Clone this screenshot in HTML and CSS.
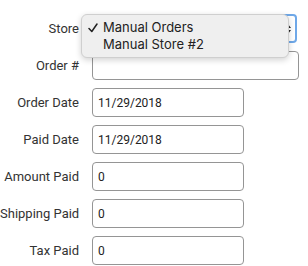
FILE: index.html
```html
<!DOCTYPE html>
<html>
<head>
<meta charset="utf-8">
<link rel="stylesheet" href="styles.css">
</head>
<body>
<div class="form">
  <label class="lbl">Store</label>
  <div class="select">
    <svg class="arrows" width="8" height="12" viewBox="0 0 8 12"><path d="M1 5 L4 1 L7 5 Z M1 7 L4 11 L7 7 Z" fill="#222"/></svg>
  </div>
  <label class="lbl">Order #</label>
  <div class="input wide"></div>
  <label class="lbl">Order Date</label>
  <div class="input">11/29/2018</div>
  <label class="lbl">Paid Date</label>
  <div class="input">11/29/2018</div>
  <label class="lbl">Amount Paid</label>
  <div class="input">0</div>
  <label class="lbl">Shipping Paid</label>
  <div class="input">0</div>
  <label class="lbl">Tax Paid</label>
  <div class="input">0</div>
</div>
<div class="menu">
  <div class="item"><svg class="check" width="10" height="10" viewBox="0 0 10 10"><path d="M1 5.5 L3.8 8.5 L9 1" fill="none" stroke="#222" stroke-width="1.5" stroke-linecap="round" stroke-linejoin="round"/></svg><span>Manual Orders</span></div>
  <div class="item"><span>Manual Store #2</span></div>
</div>
</body>
</html>
```

FILE: styles.css
```css
html, body {
  margin: 0;
  background: #fff;
}
body {
  width: 308px;
  height: 266px;
  overflow: hidden;
  position: relative;
  font-family: Roboto, "Liberation Sans", sans-serif;
}
.form {
  display: grid;
  grid-template-columns: 79px auto;
  column-gap: 13px;
  row-gap: 8px;
  padding-top: 14px;
  align-items: center;
}
.lbl {
  text-align: right;
  font-size: 13px;
  color: #333;
  white-space: nowrap;
}
.input, .select {
  box-sizing: border-box;
  height: 29px;
  width: 152px;
  border: 1px solid #959595;
  border-radius: 4px;
  padding: 0 5px;
  font-size: 12px;
  color: #222;
  display: flex;
  align-items: center;
}
.input.wide {
  width: 207px;
}
.select {
  width: 205px;
  border: 2px solid #6fa8e8;
  border-radius: 4px;
  justify-content: flex-end;
  padding-right: 3px;
}
.menu {
  position: absolute;
  left: 81px;
  top: 14px;
  width: 208px;
  height: 44px;
  box-sizing: border-box;
  background: #efefef;
  border: 1px solid #cfcfcf;
  border-radius: 6px;
  box-shadow: 0 2px 6px rgba(0,0,0,0.18);
  padding-top: 4px;
  font-family: Inter, "Liberation Sans", sans-serif;
  font-size: 13px;
  color: #222;
}
.item {
  height: 17px;
  line-height: 17px;
  display: flex;
  align-items: center;
  padding-left: 21px;
  position: relative;
}
.check {
  position: absolute;
  left: 6px;
  top: 4px;
}
```
